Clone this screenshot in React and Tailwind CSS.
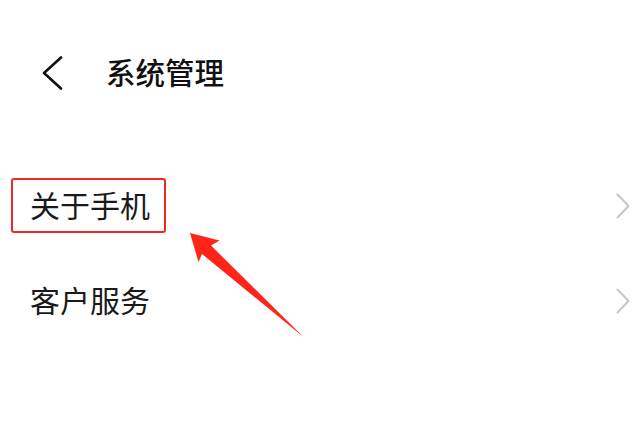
import React from 'react'

const FONT = { fontFamily: '"Noto Sans CJK SC", "Noto Sans", sans-serif' }

function ChevronRight() {
  return (
    <svg width="14" height="26" viewBox="0 0 14 26" fill="none">
      <path d="M1.5 1.5 L12.5 13 L1.5 24.5" stroke="#c6c6c6" strokeWidth="2" strokeLinecap="round" strokeLinejoin="round" />
    </svg>
  )
}

function Row({ label }) {
  return (
    <div className="flex items-center justify-between h-[95px] pl-[30px] pr-[10px]">
      <span className="text-[30px] leading-none text-[#1a1a1a] -mt-[3px]">{label}</span>
      <ChevronRight />
    </div>
  )
}

export default function App() {
  return (
    <div className="relative w-[640px] h-[427px] bg-white overflow-hidden" style={FONT}>
      {/* Header */}
      <div className="flex items-center h-[60px] mt-[43px]">
        <div className="w-[106px] flex pl-[42px]">
          <svg width="22" height="34" viewBox="0 0 22 34" fill="none">
            <path d="M19 1.5 L2 17 L19 32.5" stroke="#111" strokeWidth="2.6" strokeLinecap="round" strokeLinejoin="round" />
          </svg>
        </div>
        <span className="text-[29.5px] leading-none font-medium text-[#111] -mt-[2px]">系统管理</span>
      </div>

      {/* List */}
      <div className="mt-[55px]">
        <Row label="关于手机" />
        <Row label="客户服务" />
      </div>

      {/* Annotation: highlight box */}
      <div className="absolute left-[11px] top-[178px] w-[155px] h-[55px] border-[2.5px] border-[#f02a22] rounded-[3px]" />

      {/* Annotation: arrow */}
      <svg className="absolute left-0 top-0" width="640" height="427" viewBox="0 0 640 427">
        <polygon points="190,233 219.5,240.5 211,245.5 303.5,337 202,254 198.5,262" fill="#ff2419" />
      </svg>
    </div>
  )
}
